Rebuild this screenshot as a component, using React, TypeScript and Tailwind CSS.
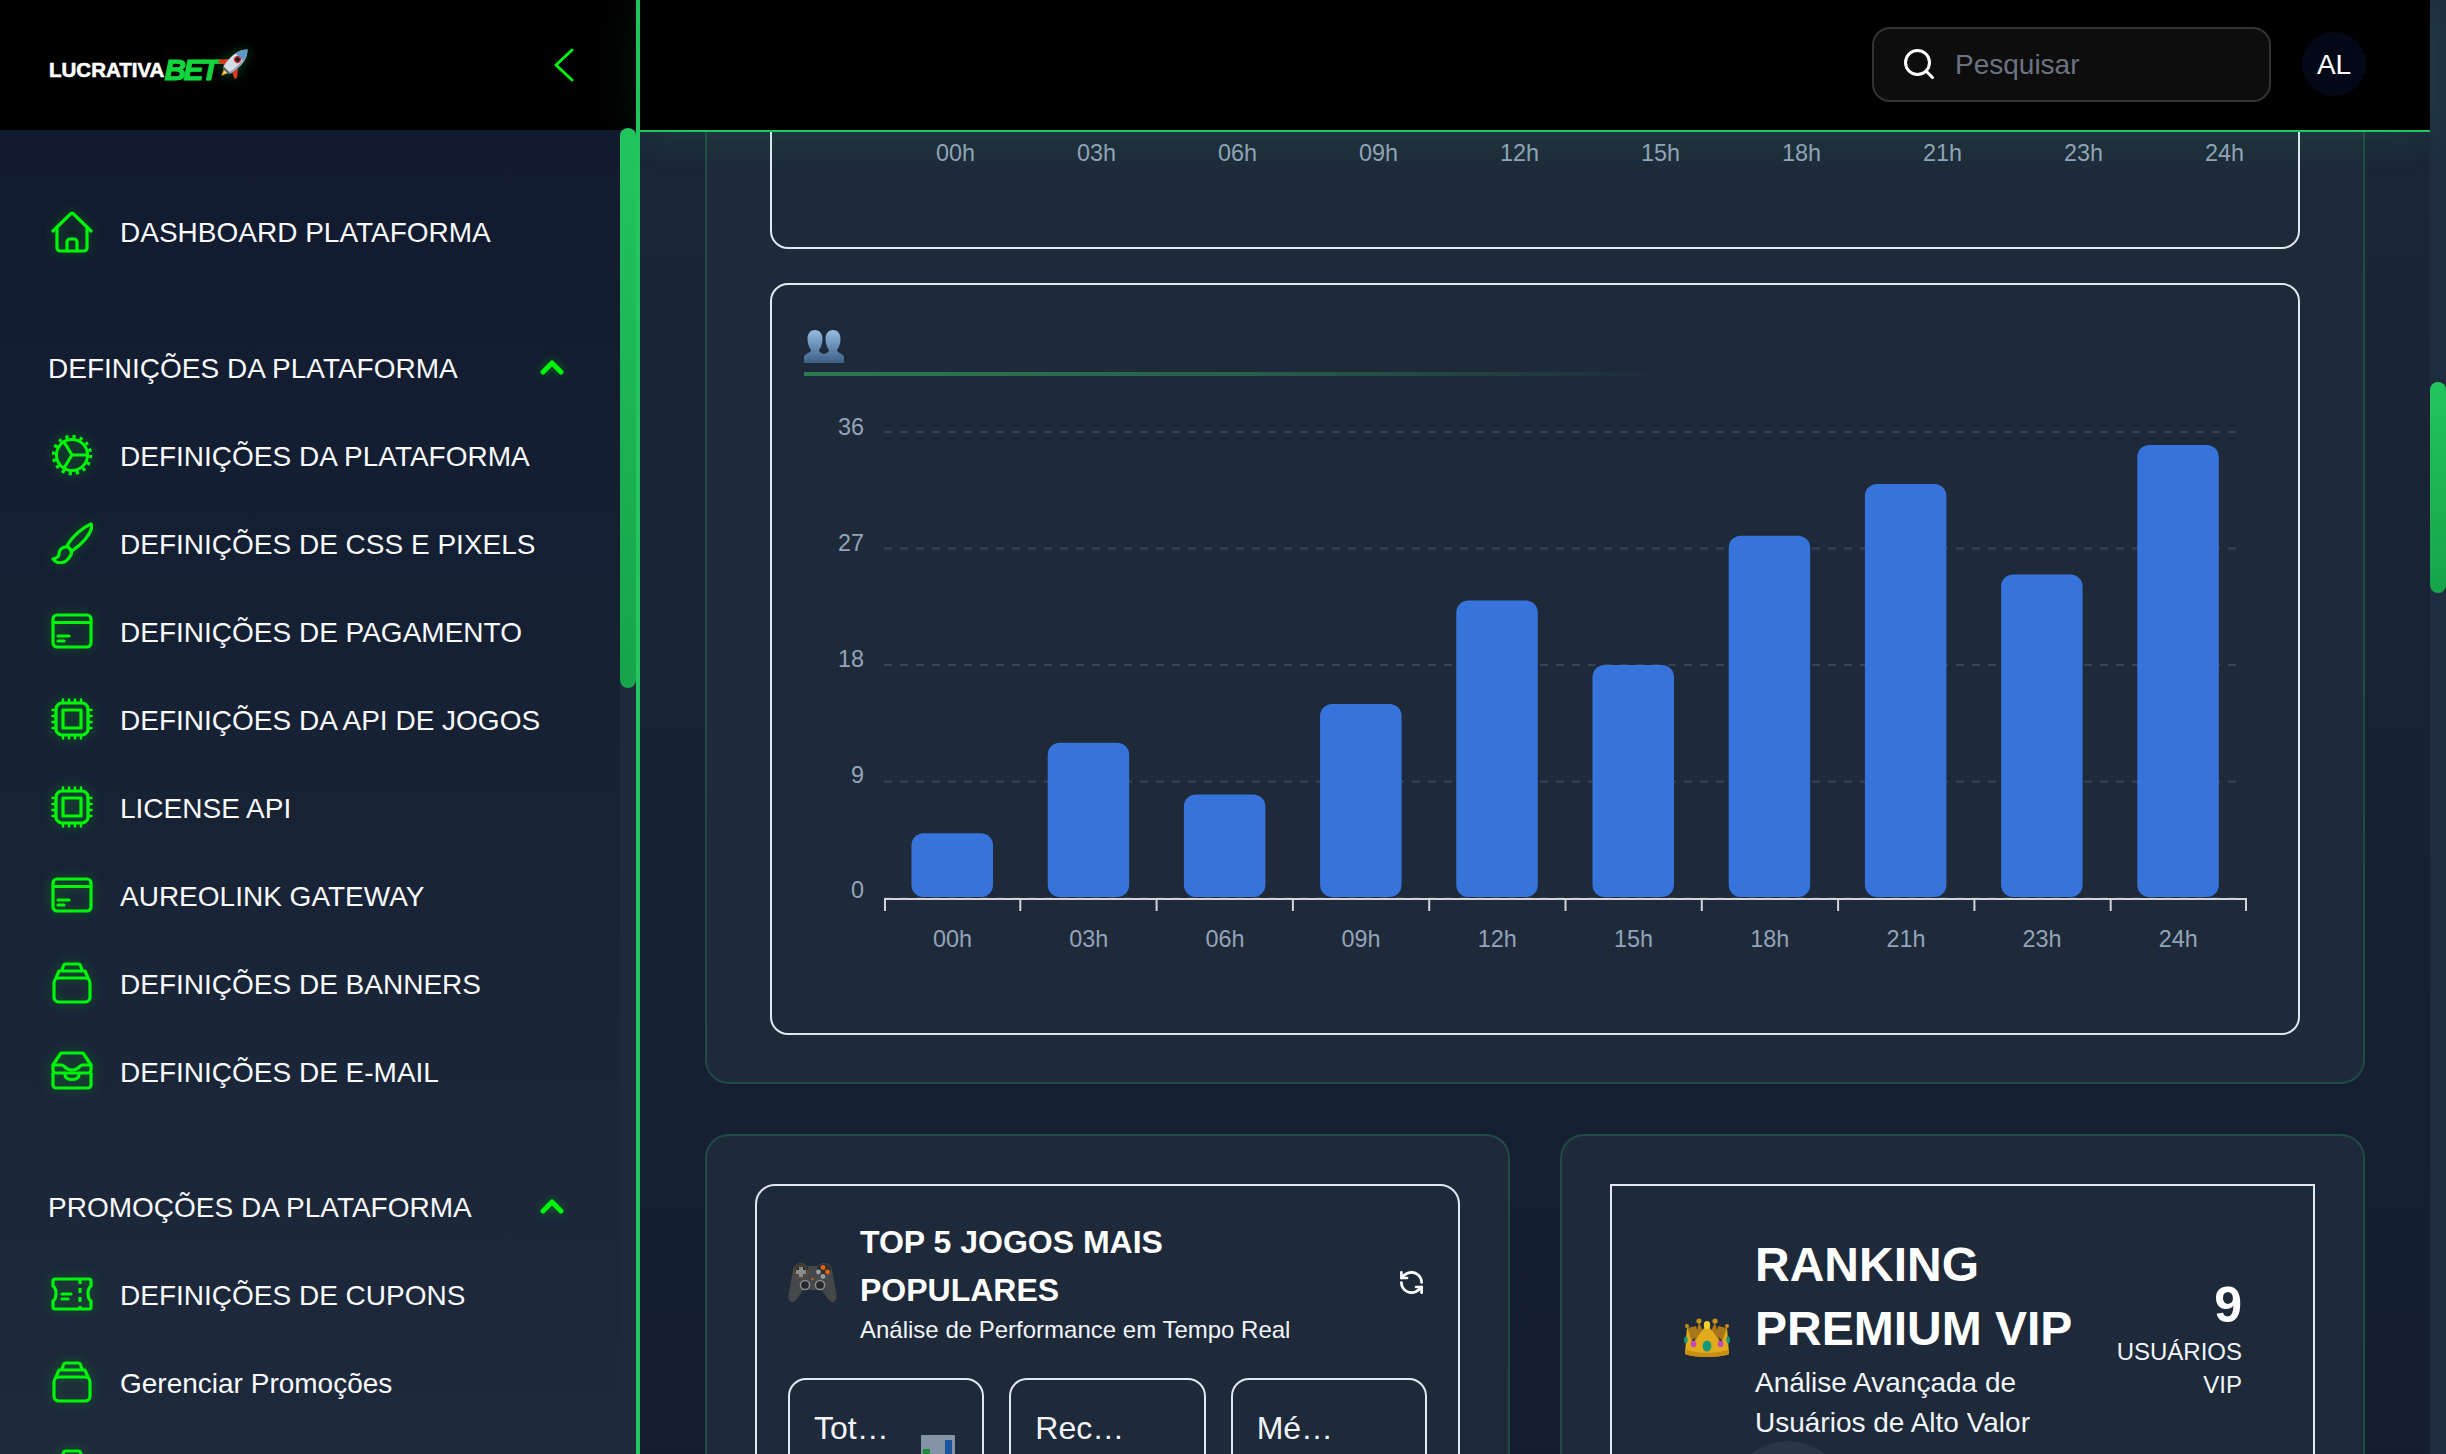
import { RefreshCcw, Search } from 'lucide-react';
import type { ReactNode } from 'react';

const HOURS = ['00h', '03h', '06h', '09h', '12h', '15h', '18h', '21h', '23h', '24h'];
const VALUES = [5, 12, 8, 15, 23, 18, 28, 32, 25, 35];
const Y_TICKS = [
  { label: '36', grid: 32, base: 35 },
  { label: '27', grid: 148.5, base: 151 },
  { label: '18', grid: 265, base: 267 },
  { label: '9', grid: 381.5, base: 382.5 },
  { label: '0', grid: 498, base: 498 },
];

function Icon({ children }: { children: ReactNode }) {
  return (
    <svg
      width="42"
      height="42"
      viewBox="0 0 42 42"
      fill="none"
      stroke="#00f50a"
      strokeWidth="3.2"
      strokeLinecap="round"
      strokeLinejoin="round"
      className="drop-shadow-[0_0_6px_rgba(0,255,0,0.3)]"
    >
      {children}
    </svg>
  );
}

const HomeIcon = () => (
  <Icon>
    <path d="M2 20 L20 2.5 a1.5 1.5 0 0 1 2 0 L40 20" />
    <path d="M6 17 V37 a3 3 0 0 0 3 3 H33 a3 3 0 0 0 3-3 V17" />
    <path d="M16 40 V31 a3 3 0 0 1 3-3 h4 a3 3 0 0 1 3 3 V40" />
  </Icon>
);

const GearIcon = () => (
  <Icon>
    <circle cx="21" cy="21" r="15.5" strokeWidth="3" />
    <circle cx="21" cy="21" r="18.5" strokeWidth="3.5" strokeDasharray="3.2 4.06" strokeLinecap="butt" />
    <path d="M21 21 H36 M21 21 L13 8 M21 21 L13 34" />
  </Icon>
);

const BrushIcon = () => (
  <Icon>
    <path d="M40 2 C33 5 22 13 16 24 L21 29 C31 22 39 13 41 5 Z" />
    <path d="M15 25 C10 25 8 29 8 32 C8 36 5 36 2 37 C5 42 13 42 17 37 C20 34 21 31 20 29" />
  </Icon>
);

const CardIcon = () => (
  <Icon>
    <rect x="2" y="5" width="38" height="32" rx="4" />
    <path d="M2 12.5 H40 M7 26 H18 M7 31 H13" />
  </Icon>
);

const ChipIcon = () => (
  <Icon>
    <rect x="5" y="5" width="32" height="32" rx="6" />
    <rect x="12" y="12" width="18" height="18" />
    <path
      strokeWidth="2.5"
      d="M12 1.5V5 M18 1.5V5 M24 1.5V5 M30 1.5V5 M12 37V40.5 M18 37V40.5 M24 37V40.5 M30 37V40.5 M1.5 12H5 M1.5 18H5 M1.5 24H5 M1.5 30H5 M37 12H40.5 M37 18H40.5 M37 24H40.5 M37 30H40.5"
    />
  </Icon>
);

const BannerIcon = () => (
  <Icon>
    <rect x="3" y="16" width="36" height="24" rx="5" />
    <path d="M5 16 L8 9 H34 L37 16" />
    <path d="M11 8 L12.5 3.5 a2 2 0 0 1 2-1.5 H27.5 a2 2 0 0 1 2 1.5 L31 8" />
  </Icon>
);

const InboxIcon = () => (
  <Icon>
    <path d="M2 15 L10 3 H32 L40 15 V20 a3 3 0 0 1-3 3 H5 a3 3 0 0 1-3-3 Z" />
    <path d="M2 15 H11 C13 15 14 20 21 20 C28 20 29 15 31 15 H40" />
    <path d="M2 23 V35 a3 3 0 0 0 3 3 H37 a3 3 0 0 0 3-3 V23" />
    <path d="M14 25 C15 31 27 31 28 25" />
  </Icon>
);

const TicketIcon = () => (
  <Icon>
    <path d="M4 6 H38 a2 2 0 0 1 2 2 V13 C36 16 36 25 40 28 V34 a2 2 0 0 1-2 2 H4 a2 2 0 0 1-2-2 V28 C6 25 6 16 2 13 V8 a2 2 0 0 1 2-2 Z" />
    <path d="M29 6 V36" strokeDasharray="5 4" strokeLinecap="butt" />
    <path d="M11 21 H20 M11 26 H17" />
  </Icon>
);

const ChevronUp = () => (
  <svg width="24" height="16" viewBox="0 0 24 16" fill="none" stroke="#00f50a" strokeWidth="5" strokeLinecap="round" strokeLinejoin="round" className="drop-shadow-[0_0_5px_rgba(0,255,0,0.35)]">
    <path d="M3 13 L12 4 L21 13" />
  </svg>
);

const Rocket = () => (
  <svg width="32" height="32" viewBox="0 0 32 32" className="drop-shadow-[0_0_6px_rgba(0,255,100,0.3)]">
    <g transform="rotate(45 16 16)">
      <path d="M13 27 L16 34 L19 27 Z" fill="#f6b40e" />
      <path d="M14.5 27 L16 31 L17.5 27 Z" fill="#fff3b0" />
      <path d="M9.5 17 L3.5 24 L4 27 L10.5 24 Z" fill="#e0361c" />
      <path d="M22.5 17 L28.5 24 L28 27 L21.5 24 Z" fill="#e0361c" />
      <path d="M16 -3 C23 3 23.5 16 21 26 H11 C8.5 16 9 3 16 -3 Z" fill="#d4dde6" />
      <path d="M16 -3 C19 0 21 4 21.7 8 H10.3 C11 4 13 0 16 -3 Z" fill="#5f97c9" />
      <path d="M19 3 C21 8 21 18 19 26 H21 C23.5 16 23 5 19 3 Z" fill="#8ea2b8" />
      <circle cx="16" cy="11" r="3.6" fill="#c22c2c" />
      <circle cx="16" cy="11" r="2.2" fill="#1b1b26" />
      <path d="M11 26 H21 L20 28 H12 Z" fill="#5b6470" />
    </g>
  </svg>
);

const Busts = () => (
  <svg width="40" height="33" viewBox="0 0 40 33">
    <defs>
      <linearGradient id="bust" x1="0" y1="0" x2="0" y2="1">
        <stop offset="0" stopColor="#95bce2" />
        <stop offset="1" stopColor="#3c5f86" />
      </linearGradient>
    </defs>
    <path d="M11 0 C16 0 18.5 4 18.5 9 C18.5 14 16.5 18 15 20 C15 22 17 23 20 24 C23 23 25 22 25 20 C23.5 18 21.5 14 21.5 9 C21.5 4 24 0 29 0 C34 0 36.5 4 36.5 9 C36.5 14 34.5 18 33 20 C33 23 40 24 40 27 V33 H0 V27 C0 24 7 23 7 20 C5.5 18 3.5 14 3.5 9 C3.5 4 6 0 11 0 Z" fill="url(#bust)" />
  </svg>
);

const Gamepad = () => (
  <svg width="49" height="41" viewBox="0 0 49 41" className="shrink-0">
    <path d="M13 1 C8 1 6 4 5 8 L0.5 33 C0 38 3 41 5 40 C9 39 12 31 16 28 H33 C37 31 40 39 44 40 C46 41 49 38 48.5 33 L44 8 C43 4 41 1 36 1 C33 1 31 3 29 4 H20 C18 3 16 1 13 1 Z" fill="#45484a" />
    <path d="M13 2 C8 2 7 5 6 8 C9 14 17 15 20 8 L20 5 C18 4 16 2 13 2 Z" fill="#2c2e30" />
    <path d="M36 2 C41 2 42 5 43 8 C40 14 32 15 29 8 L29 5 C31 4 33 2 36 2 Z" fill="#2c2e30" />
    <circle cx="13" cy="10" r="6.5" fill="none" stroke="#7d4a2e" strokeWidth="1" />
    <path d="M11 5 h4 v3 h3 v4 h-3 v3 h-4 v-3 h-3 v-4 h3 Z" fill="#8a8d8e" />
    <circle cx="35" cy="5.5" r="2.4" fill="#e8630f" />
    <circle cx="39.5" cy="10" r="2.4" fill="#e8630f" />
    <circle cx="30.5" cy="10" r="2.4" fill="#9a9c9d" />
    <circle cx="35" cy="14.5" r="2.4" fill="#9a9c9d" />
    <circle cx="17" cy="23" r="4.6" fill="#26282a" stroke="#8a8d8e" strokeWidth="1.5" />
    <circle cx="32" cy="23" r="4.6" fill="#26282a" stroke="#8a8d8e" strokeWidth="1.5" />
    <circle cx="24.5" cy="17" r="1.3" fill="#c2561a" />
  </svg>
);

const Crown = () => (
  <svg width="46" height="40" viewBox="0 0 46 40" className="shrink-0">
    <path d="M3 10 L5 26 L14 16 L12 8 Z" fill="#a9761a" />
    <path d="M43 10 L41 26 L32 16 L34 8 Z" fill="#a9761a" />
    <path d="M15 4 L23 22 L31 4 L36 24 H10 Z" fill="#a9761a" />
    <path d="M3 9 L9 27 L14 18 L23 6 L32 18 L37 27 L43 9 L45 36 C36 40 10 40 1 36 Z" fill="#e2ab1e" />
    <path d="M1 31 C10 36 36 36 45 31 L45 36 C36 40 10 40 1 36 Z" fill="#c98d12" />
    <circle cx="3" cy="8" r="2" fill="#c4921b" />
    <circle cx="43" cy="8" r="2" fill="#c4921b" />
    <circle cx="15" cy="3" r="2.6" fill="#c4921b" />
    <circle cx="31" cy="3" r="2.6" fill="#c4921b" />
    <ellipse cx="23" cy="7" rx="3.2" ry="4" fill="#f3d02e" />
    <ellipse cx="23" cy="28" rx="4.4" ry="5.5" fill="#109a7a" />
    <ellipse cx="9.5" cy="26" rx="2.8" ry="3.2" fill="#c948b8" />
    <ellipse cx="36.5" cy="26" rx="2.8" ry="3.2" fill="#c948b8" />
    <ellipse cx="1.8" cy="22" rx="1.8" ry="3.4" fill="#109a7a" />
    <ellipse cx="44.2" cy="22" rx="1.8" ry="3.4" fill="#109a7a" />
  </svg>
);

const BarChartEmoji = () => (
  <svg width="34" height="42" viewBox="0 0 34 42">
    <rect width="34" height="42" fill="#8492a6" />
    <rect x="2" y="14" width="7" height="28" fill="#1f8a3a" />
    <rect x="24" y="5" width="7" height="37" fill="#1c549e" />
  </svg>
);

function MenuItem({ icon, label, textClass = 'pt-[3px]' }: { icon: ReactNode; label: string; textClass?: string }) {
  return (
    <a className="flex h-[88px] items-center text-[28px] leading-none text-[#f8fafc]">
      <span className="flex w-[46px] shrink-0 justify-center">{icon}</span>
      <span className={`ml-[25px] whitespace-nowrap ${textClass}`}>{label}</span>
    </a>
  );
}

function MenuHeading({ label }: { label: string }) {
  return (
    <div className="mt-[47px] flex h-[88px] items-center justify-between pr-[56px] text-[28px] leading-none text-[#f8fafc]">
      <span className="-ml-px whitespace-nowrap pt-[3px]">{label}</span>
      <ChevronUp />
    </div>
  );
}

function Sidebar() {
  return (
    <aside className="flex h-full w-[640px] shrink-0 flex-col border-r-4 border-[#22c55e]">
      <div className="flex h-[130px] shrink-0 items-center justify-between bg-black pl-[49px] pr-[62px]">
        <div className="mt-[10px] flex items-center">
          <span className="text-[20.5px] font-bold leading-none text-white [-webkit-text-stroke:0.6px_#ffffff]">LUCRATIVA</span>
          <span className="text-[30px] font-bold italic leading-none tracking-[-2.5px] text-[#12d63e] [-webkit-text-stroke:1px_#12d63e]">BET</span>
          <span className="-mt-[14px] ml-[1px]"><Rocket /></span>
        </div>
        <svg width="20" height="34" viewBox="0 0 20 34" fill="none" stroke="#00f50a" strokeWidth="3" strokeLinecap="round" strokeLinejoin="round">
          <path d="M18 2 L2 17 L18 32" />
        </svg>
      </div>
      <div className="flex min-h-0 flex-1">
        <nav className="flex-1 overflow-hidden bg-linear-to-b from-[#111a2e] to-[#1e2a3c] pl-[49px] pt-[58px]">
          <MenuItem icon={<HomeIcon />} label="DASHBOARD PLATAFORMA" textClass="pt-[1px]" />
          <MenuHeading label="DEFINIÇÕES DA PLATAFORMA" />
          <MenuItem icon={<GearIcon />} label="DEFINIÇÕES DA PLATAFORMA" />
          <MenuItem icon={<BrushIcon />} label="DEFINIÇÕES DE CSS E PIXELS" />
          <MenuItem icon={<CardIcon />} label="DEFINIÇÕES DE PAGAMENTO" />
          <MenuItem icon={<ChipIcon />} label="DEFINIÇÕES DA API DE JOGOS" />
          <MenuItem icon={<ChipIcon />} label="LICENSE API" />
          <MenuItem icon={<CardIcon />} label="AUREOLINK GATEWAY" />
          <MenuItem icon={<BannerIcon />} label="DEFINIÇÕES DE BANNERS" />
          <MenuItem icon={<InboxIcon />} label="DEFINIÇÕES DE E-MAIL" />
          <MenuHeading label="PROMOÇÕES DA PLATAFORMA" />
          <MenuItem icon={<TicketIcon />} label="DEFINIÇÕES DE CUPONS" />
          <MenuItem icon={<BannerIcon />} label="Gerenciar Promoções" />
          <MenuItem icon={<BannerIcon />} label="" />
        </nav>
        <div className="w-4 shrink-0 bg-[#1e293b]">
          <div className="relative -mt-[2px] h-[560px] rounded-full bg-linear-to-b from-[#22c55e] to-[#16a34a]" />
        </div>
      </div>
    </aside>
  );
}

function Topbar() {
  return (
    <header className="relative z-10 flex h-[132px] shrink-0 items-center justify-end border-b-2 border-[#22c55e] bg-black pb-[2px] pr-[64px] shadow-[0_4px_40px_rgba(34,197,94,0.14)]">
      <div className="flex h-[75px] w-[399px] items-center rounded-[18px] border-2 border-[#333333] bg-[#0d0d0d] pl-[27px]">
        <Search size={36} strokeWidth={2} className="text-white" />
        <span className="ml-[18px] pt-[2px] text-[28px] text-[#6b7280]">Pesquisar</span>
      </div>
      <div className="ml-[31px] flex size-16 items-center justify-center rounded-full bg-[#030817] pt-[2px] text-[28px] font-medium text-white">AL</div>
    </header>
  );
}

function HourlyChart() {
  const colWidth = 136.3;
  return (
    <svg width="1461" height="560" viewBox="0 0 1461 560" className="mt-[24px]" fontFamily="'Liberation Sans', sans-serif">
      {Y_TICKS.map((t) => (
        <g key={t.label}>
          <line x1="80" x2="1436" y1={t.grid} y2={t.grid} stroke="#354254" strokeWidth="2" strokeDasharray="8 8" />
          <text x="60" y={t.base} textAnchor="end" fontSize="23.4" fill="#94a3b8">{t.label}</text>
        </g>
      ))}
      {VALUES.map((v, i) => (
        <rect key={i} x={107.5 + i * 136.2} y={498 - v * 12.94} width="81.5" height={v * 12.94 - 1} rx="12" fill="#3674db" />
      ))}
      <path d="M81 511 V499 H1442 V511" fill="none" stroke="#d4d4d8" strokeWidth="2" />
      {HOURS.map((h, i) => (
        <g key={h}>
          {i > 0 && <line x1={80 + i * colWidth} x2={80 + i * colWidth} y1="499" y2="511" stroke="#d4d4d8" strokeWidth="2" />}
          <text x={148.5 + i * 136.2} y="547" textAnchor="middle" fontSize="23.4" fill="#94a3b8">{h}</text>
        </g>
      ))}
    </svg>
  );
}

function StatCard({ label, icon }: { label: string; icon?: ReactNode }) {
  return (
    <div className="flex h-[200px] rounded-[18px] border-2 border-[#e2e8f0] pl-[24px] pt-[28px]">
      <span className="text-[32px] leading-10 text-[#f1f5f9]">{label}</span>
      {icon && <span className="ml-[32px] mt-[27px] block">{icon}</span>}
    </div>
  );
}

export default function App() {
  return (
    <div className="flex h-[1454px] w-full overflow-hidden bg-black font-['Liberation_Sans',Arial,sans-serif]">
      <Sidebar />
      <main className="flex min-w-0 flex-1 flex-col">
        <Topbar />
        <div className="min-h-0 flex-1 overflow-hidden bg-linear-to-b from-[#1b2638] to-[#141d30] px-[65px]">
          {/* scrolled state: the first chart sits partly under the top bar */}
          <section className="-mt-[100px] rounded-[24px] border-2 border-[#1f4a45] bg-[#1e2a3a] px-[63px] pb-[47px] pt-[46px]">
            <div className="flex h-[169px] items-end rounded-[18px] border-2 border-[#e2e8f0] pb-[80px] pl-[113px] pr-[3px]">
              <div className="grid w-full grid-cols-10 text-center text-[23.4px] leading-7 text-[#94a3b8]">
                {HOURS.map((h) => (
                  <span key={h}>{h}</span>
                ))}
              </div>
            </div>
            <div className="mt-[34px] h-[752px] rounded-[18px] border-2 border-[#e2e8f0] px-[32px] pt-[45px]">
              <Busts />
              <div className="mt-[9px] h-[4px] w-[856px] bg-linear-to-r from-[#2a7a50] via-[#2a7a50]/70 to-transparent" />
              <HourlyChart />
            </div>
          </section>

          <div className="mt-[50px] grid grid-cols-2 gap-[50px]">
            <section className="h-[400px] rounded-[24px] border-2 border-[#1f4a45] bg-[#1e2a3a] p-[48px]">
              <div className="h-[400px] rounded-[20px] border-2 border-[#e2e8f0] px-[31px] pt-[32px]">
                <div className="flex items-center">
                  <Gamepad />
                  <div className="ml-[23px] flex-1">
                    <h2 className="text-[32px] font-bold leading-[48px] text-white">TOP 5 JOGOS MAIS<br />POPULARES</h2>
                    <p className="text-[24px] leading-8 text-[#f1f5f9]">Análise de Performance em Tempo Real</p>
                  </div>
                  <RefreshCcw size={27} strokeWidth={2.4} className="mr-[2px] text-white" />
                </div>
                <div className="mt-[32px] grid grid-cols-3 gap-[25px]">
                  <StatCard label="Tot…" icon={<BarChartEmoji />} />
                  <StatCard label="Rec…" />
                  <StatCard label="Mé…" />
                </div>
              </div>
            </section>

            <section className="h-[400px] rounded-[24px] border-2 border-[#1f4a45] bg-[#1e2a3a] p-[48px]">
              <div className="relative h-[400px] border-2 border-[#e2e8f0] pl-[72px] pr-[71px] pt-[47px]">
                <div className="flex items-center">
                  <Crown />
                  <div className="ml-[25px] flex-1">
                    <h2 className="text-[48px] font-bold leading-[64px] text-white">RANKING<br />PREMIUM VIP</h2>
                    <p className="mt-[2px] text-[28px] leading-10 text-[#f1f5f9]">Análise Avançada de<br />Usuários de Alto Valor</p>
                  </div>
                  <div className="text-right">
                    <div className="text-[50px] font-bold leading-[60px] text-white">9</div>
                    <div className="text-[24px] leading-[33px] text-[#f1f5f9]">USUÁRIOS<br />VIP</div>
                  </div>
                </div>
                <div className="mt-[-2px] ml-[45px] size-[118px] rounded-full bg-[#2a3547]" />
              </div>
            </section>
          </div>
        </div>
      </main>
      <div className="w-4 shrink-0 bg-[#1f2c40]">
        <div className="mt-[382px] h-[211px] rounded-full bg-linear-to-b from-[#22c55e] to-[#16a34a]" />
      </div>
    </div>
  );
}
